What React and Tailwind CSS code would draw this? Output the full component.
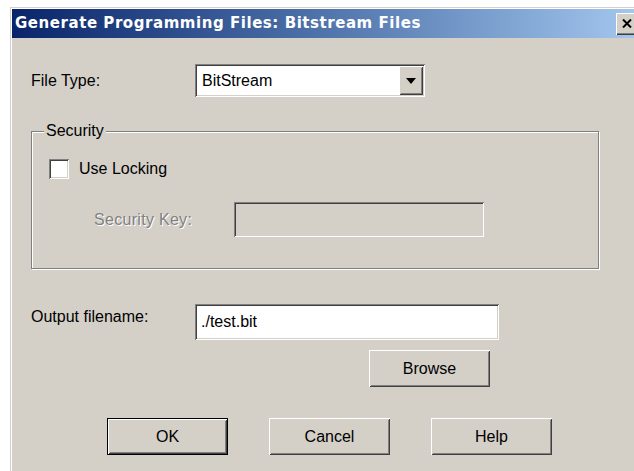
import React from "react";

const sunken =
  "shadow-[inset_1px_1px_#808080,inset_-1px_-1px_#ffffff,inset_2px_2px_#404040,inset_-2px_-2px_#d4d0c8]";
const raised =
  "shadow-[inset_1px_1px_#ffffff,inset_-1px_-1px_#404040,inset_2px_2px_#d4d0c8,inset_-2px_-2px_#808080]";

function Button({ children, isDefault, className = "" }) {
  return (
    <button
      className={`h-[37px] w-[121px] bg-[#d4d0c8] text-[16px] text-black ${
        isDefault ? "border border-black" : ""
      } ${raised} ${className}`}
    >
      {children}
    </button>
  );
}

export default function App() {
  return (
    <div className="w-[634px] h-[471px] overflow-hidden bg-white pt-[7px] pl-[10px] font-['Liberation_Sans',Arial,sans-serif]">
      <div className="w-[640px] h-[470px] bg-[#d4d0c8] p-[2px] shadow-[inset_1px_1px_#d4d0c8,inset_2px_2px_#ffffff]">
        {/* title bar */}
        <div className="h-[29px] flex items-center justify-between bg-gradient-to-r from-[#0a246a] to-[#a6caf0]">
          <span className="pl-[3px] text-white font-bold text-[15px] [font-family:'DejaVu_Sans',Verdana,sans-serif] tracking-[0.55px]">
            Generate Programming Files: Bitstream Files
          </span>
          <div className="mr-[10px] w-[22px] h-[22px] bg-[#d4d0c8] flex items-center justify-center shadow-[inset_1px_1px_#ffffff,inset_-1px_-1px_#404040,inset_-2px_-2px_#808080]">
            <svg width="10" height="9" viewBox="0 0 10 9">
              <path d="M1 0.5 L9 8.5 M9 0.5 L1 8.5" stroke="#000" strokeWidth="2" />
            </svg>
          </div>
        </div>

        <div className="pl-[19px] text-[16px] text-black">
          {/* file type */}
          <div className="mt-[26px] flex items-center">
            <span className="w-[164px]">File Type:</span>
            <div className={`w-[230px] h-[33px] bg-white flex items-center p-[2px] ${sunken}`}>
              <span className="flex-1 pl-[5px]">BitStream</span>
              <div className={`w-[24px] h-[29px] bg-[#d4d0c8] flex items-center justify-center ${raised}`}>
                <svg width="10" height="6" viewBox="0 0 10 6">
                  <path d="M0 0 H10 L5 6 Z" fill="#000" />
                </svg>
              </div>
            </div>
          </div>

          {/* security group */}
          <div className="relative mt-[34px] w-[568px] h-[138px] border border-[#808080] shadow-[inset_1px_1px_#ffffff,1px_1px_#ffffff]">
            <span className="absolute -top-[11px] left-[12px] px-[2px] bg-[#d4d0c8] leading-[20px]">
              Security
            </span>
            <div className="pl-[17px] pt-[25px] flex items-center">
              <div className={`w-[20px] h-[20px] bg-white ${sunken}`} />
              <span className="ml-[10px]">Use Locking</span>
            </div>
            <div className="mt-[21px] flex items-center">
              <span className="pl-[62px] w-[202px] text-[#808080] tracking-[0.3px] [text-shadow:1px_1px_#ffffff]">
                Security Key:
              </span>
              <div className={`w-[250px] h-[35px] bg-[#d4d0c8] ${sunken}`} />
            </div>
          </div>

          {/* output filename */}
          <div className="mt-[35px] flex items-center">
            <span className="w-[164px] -mt-[10px]">Output filename:</span>
            <div className={`w-[304px] h-[36px] bg-white flex items-center ${sunken}`}>
              <span className="pl-[6px]">./test.bit</span>
            </div>
          </div>
          <div className="mt-[10px] pl-[338px]">
            <Button>Browse</Button>
          </div>

          {/* dialog buttons */}
          <div className="mt-[31px] pl-[76px] flex gap-[41px]">
            <Button isDefault>OK</Button>
            <Button>Cancel</Button>
            <Button>Help</Button>
          </div>
        </div>
      </div>
    </div>
  );
}
